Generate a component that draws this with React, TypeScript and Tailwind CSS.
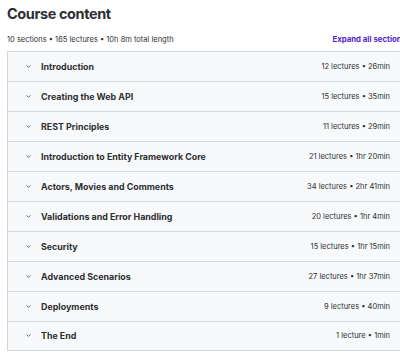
import { ChevronDown } from "lucide-react";

type Section = {
  title: string;
  lectures: number;
  length: string;
};

const SECTIONS: Section[] = [
  { title: "Introduction", lectures: 12, length: "26min" },
  { title: "Creating the Web API", lectures: 15, length: "35min" },
  { title: "REST Principles", lectures: 11, length: "29min" },
  { title: "Introduction to Entity Framework Core", lectures: 21, length: "1hr 20min" },
  { title: "Actors, Movies and Comments", lectures: 34, length: "2hr 41min" },
  { title: "Validations and Error Handling", lectures: 20, length: "1hr 4min" },
  { title: "Security", lectures: 15, length: "1hr 15min" },
  { title: "Advanced Scenarios", lectures: 27, length: "1hr 37min" },
  { title: "Deployments", lectures: 9, length: "40min" },
  { title: "The End", lectures: 1, length: "1min" },
];

export default function App() {
  return (
    <div className="h-[352px] w-[400px] overflow-hidden bg-white font-['Inter',sans-serif] text-[#2d2f31]">
      <div className="w-[400px] pl-[7px] pt-[3px]">
        <h2 className="text-[14.5px] font-bold leading-[22px] tracking-[-0.4px]">
          Course content
        </h2>
        <div className="mt-[9px] flex h-[12px] items-center justify-between">
          <span className="text-[7.5px] text-[#2d2f31]">
            10 sections • 165 lectures • 10h 8m total length
          </span>
          <span className="-mr-[6px] whitespace-nowrap text-[7.8px] font-bold text-[#5624d0]">
            Expand all sections
          </span>
        </div>
        <div className="mt-[5px] w-[400px] border-l border-[#d1d7dc]">
          {SECTIONS.map((section) => (
            <SectionRow key={section.title} section={section} />
          ))}
        </div>
      </div>
    </div>
  );
}

function SectionRow({ section }: { section: Section }) {
  const count = `${section.lectures} ${section.lectures === 1 ? "lecture" : "lectures"}`;
  return (
    <div className="flex h-[30px] items-center justify-between border-t border-[#d1d7dc] bg-[#f7f9fa] pl-[17px] pr-[17px] last:border-b">
      <div className="flex items-center gap-[9px]">
        <ChevronDown className="h-[7px] w-[7px] text-[#2d2f31]" strokeWidth={2.4} />
        <span className="text-[8.9px] font-bold">{section.title}</span>
      </div>
      <span className="text-[7.5px] text-[#2d2f31]">
        {count} • {section.length}
      </span>
    </div>
  );
}
